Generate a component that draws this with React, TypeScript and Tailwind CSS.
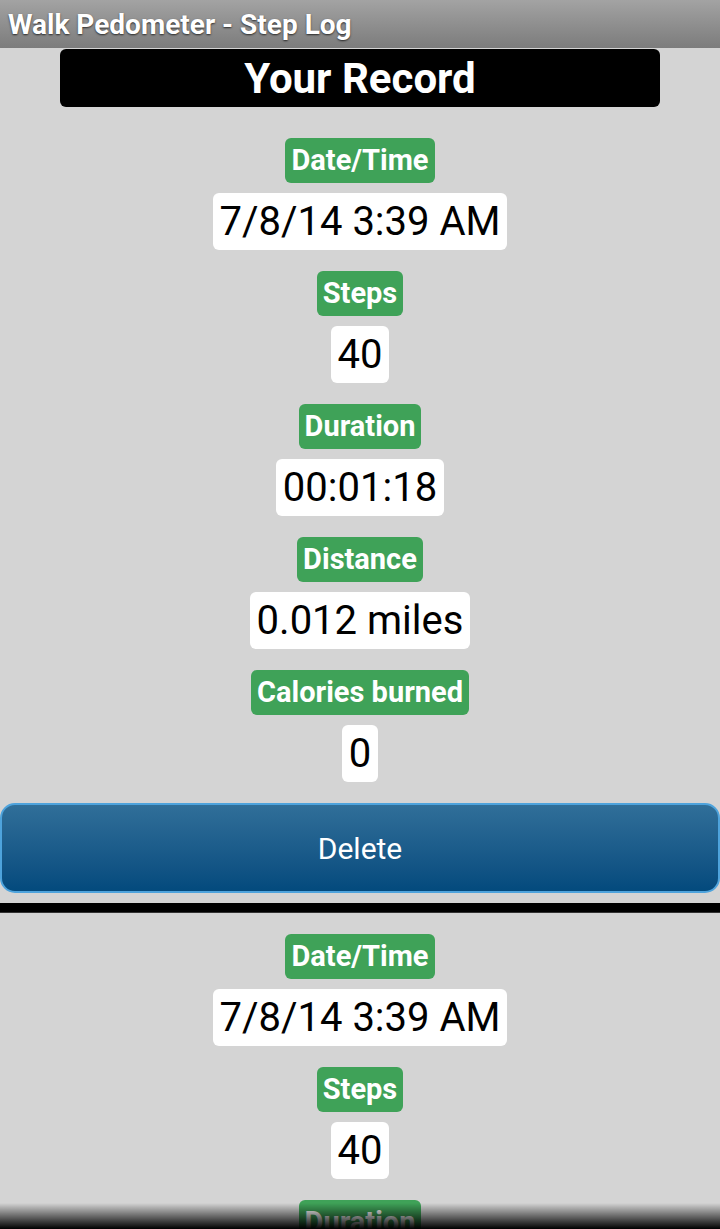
const records = [
  [
    { label: 'Date/Time', value: '7/8/14 3:39 AM' },
    { label: 'Steps', value: '40' },
    { label: 'Duration', value: '00:01:18' },
    { label: 'Distance', value: '0.012 miles' },
    { label: 'Calories burned', value: '0' },
  ],
  [
    { label: 'Date/Time', value: '7/8/14 3:39 AM' },
    { label: 'Steps', value: '40' },
    { label: 'Duration', value: '00:01:18' },
    { label: 'Distance', value: '0.012 miles' },
    { label: 'Calories burned', value: '0' },
  ],
];

function Field({ label, value }: { label: string; value: string }) {
  return (
    <div className="flex flex-col items-center mt-[21px]">
      <div className="h-[45px] px-[6px] rounded-[6px] bg-[#3fa258] text-white font-bold text-[29px] leading-[45px]">
        {label}
      </div>
      <div className="mt-[10px] h-[57px] px-[7px] rounded-[6px] bg-white text-black text-[40px] leading-[57px]">
        {value}
      </div>
    </div>
  );
}

export default function App() {
  return (
    <div className="relative h-[1229px] w-[720px] overflow-hidden bg-[#d4d4d4] font-[Roboto]">
      {/* title bar */}
      <div className="h-[48px] bg-gradient-to-b from-[#a3a3a3] to-[#7c7c7c] pl-[8px] text-white font-bold text-[28px] leading-[50px] [text-shadow:0_1px_2px_rgba(0,0,0,0.7)]">
        Walk Pedometer - Step Log
      </div>

      <div className="mx-[60px] mt-[1px] h-[58px] rounded-[6px] bg-black text-center text-white font-bold text-[42px] leading-[60px]">
        Your Record
      </div>

      <div className="flex flex-col pt-[10px]">
        {records.map((rec, i) => (
          <div key={i} className="flex flex-col">
            {i > 0 && (
              <div className="mt-[10px] h-[10px] bg-black border-b border-[#333]" />
            )}
            {rec.map((f) => (
              <Field key={f.label} label={f.label} value={f.value} />
            ))}
            <button className="mt-[21px] w-full h-[90px] rounded-[15px] border-2 border-[#4ea3dc] bg-gradient-to-b from-[#306f99] to-[#034a7d] text-white text-[30px]">
              Delete
            </button>
          </div>
        ))}
      </div>

      {/* bottom fade */}
      <div className="absolute bottom-0 left-0 right-0 h-[26px] bg-gradient-to-b from-transparent to-black" />
    </div>
  );
}
